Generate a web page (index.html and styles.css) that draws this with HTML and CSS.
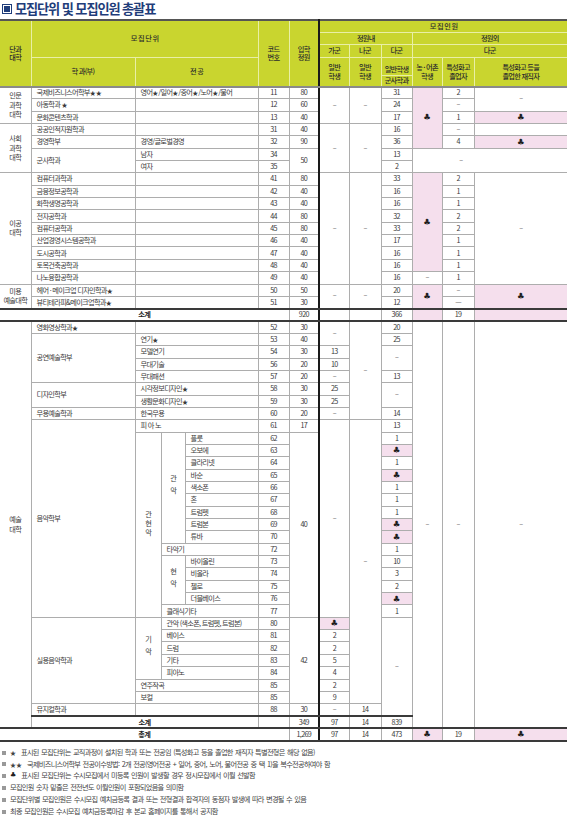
FILE: index.html
```html
<!DOCTYPE html>
<html lang="ko">
<head>
<meta charset="utf-8">
<title>모집단위 및 모집인원 총괄표</title>
<link rel="stylesheet" href="styles.css">
</head>
<body>
<div class="title"><span class="ico"></span><span class="ttl">모집단위 및 모집인원 총괄표</span></div>
<table class="tbl">
<colgroup>
<col class="c-col"><col class="c-dept"><col class="c-m1"><col class="c-m2"><col class="c-m3"><col class="c-code"><col class="c-quota"><col class="c-ga"><col class="c-na"><col class="c-da"><col class="c-farm"><col class="c-voc"><col class="c-work">
</colgroup>
<thead>
<tr class="h1">
<th rowspan="4" class="hb">단과<br>대학</th>
<th colspan="4" rowspan="3">모 집 단 위</th>
<th rowspan="4" class="hb">코드<br>번호</th>
<th rowspan="4" class="hb">입학<br>정원</th>
<th colspan="6">모 집 인 원</th>
</tr>
<tr class="h2"><th colspan="3">정원내</th><th colspan="3">정원외</th></tr>
<tr class="h3"><th>가군</th><th>나군</th><th>다군</th><th colspan="3">다군</th></tr>
<tr class="h4">
<th class="hb">학 과(부)</th><th colspan="3" class="hb">전 공</th>
<th class="hb">일반<br>학생</th><th class="hb">일반<br>학생</th>
<th class="hb split"><div class="s1">일반학생</div><div class="s2">군사학과</div></th>
<th class="hb">농 · 어촌<br>학생</th><th class="hb">특성화고<br>졸업자</th><th class="hb">특성화고 등을<br>졸업한 재직자</th>
</tr>
</thead>
<tbody>
<tr><td rowspan="3" class="coll">인문<br>과학<br>대학</td><td class="l">국제비즈니스어학부<span class="st">★★</span></td><td colspan="3" class="l">영어<span class="st">★</span>/일어<span class="st">★</span>/중어<span class="st">★</span>/노어<span class="st">★</span>/불어</td><td>11</td><td>80</td><td rowspan="3" class="d">–</td><td rowspan="3" class="d">–</td><td>31</td><td rowspan="5" class="pk"><span class="cl">♣</span></td><td>2</td><td rowspan="2" class="d">–</td></tr>
<tr><td class="l">아동학과 <span class="st">★</span></td><td colspan="3"></td><td>12</td><td>60</td><td>24</td><td class="d">–</td></tr>
<tr><td class="l">문화콘텐츠학과</td><td colspan="3"></td><td>13</td><td>40</td><td>17</td><td>1</td><td class="pk"><span class="cl">♣</span></td></tr>
<tr><td rowspan="4" class="coll">사회<br>과학<br>대학</td><td class="l">공공인적자원학과</td><td colspan="3"></td><td>31</td><td>40</td><td rowspan="4" class="d">–</td><td rowspan="4" class="d">–</td><td>16</td><td class="d">–</td><td></td></tr>
<tr><td class="l">경영학부</td><td colspan="3" class="l">경영/글로벌경영</td><td>32</td><td>90</td><td>36</td><td>4</td><td class="pk"><span class="cl">♣</span></td></tr>
<tr><td rowspan="2" class="l">군사학과</td><td colspan="3" class="l">남자</td><td>34</td><td rowspan="2">50</td><td>13</td><td colspan="3" rowspan="2" class="d shift">–</td></tr>
<tr><td colspan="3" class="l">여자</td><td>35</td><td>2</td></tr>
<tr><td rowspan="9" class="coll">이공<br>대학</td><td class="l">컴퓨터과학과</td><td colspan="3"></td><td>41</td><td>80</td><td rowspan="9" class="d">–</td><td rowspan="9" class="d">–</td><td>33</td><td rowspan="8" class="pk"><span class="cl">♣</span></td><td>2</td><td rowspan="9" class="d">–</td></tr>
<tr><td class="l">금융정보공학과</td><td colspan="3"></td><td>42</td><td>40</td><td>16</td><td>1</td></tr>
<tr><td class="l">화학생명공학과</td><td colspan="3"></td><td>43</td><td>40</td><td>16</td><td>1</td></tr>
<tr><td class="l">전자공학과</td><td colspan="3"></td><td>44</td><td>80</td><td>32</td><td>2</td></tr>
<tr><td class="l">컴퓨터공학과</td><td colspan="3"></td><td>45</td><td>80</td><td>33</td><td>2</td></tr>
<tr><td class="l">산업경영시스템공학과</td><td colspan="3"></td><td>46</td><td>40</td><td>17</td><td>1</td></tr>
<tr><td class="l">도시공학과</td><td colspan="3"></td><td>47</td><td>40</td><td>16</td><td>1</td></tr>
<tr><td class="l">토목건축공학과</td><td colspan="3"></td><td>48</td><td>40</td><td>16</td><td>1</td></tr>
<tr><td class="l">나노융합공학과</td><td colspan="3"></td><td>49</td><td>40</td><td>16</td><td class="d">–</td><td>1</td></tr>
<tr><td rowspan="2" class="coll">미용<br>예술대학</td><td class="l">헤어 · 메이크업 디자인학과<span class="st">★</span></td><td colspan="3"></td><td>50</td><td>50</td><td rowspan="2" class="d">–</td><td rowspan="2" class="d">–</td><td>20</td><td rowspan="2" class="pk"><span class="cl">♣</span></td><td class="d">–</td><td rowspan="2" class="pk"><span class="cl">♣</span></td></tr>
<tr><td class="l">뷰티테라피&amp;메이크업학과<span class="st">★</span></td><td colspan="3"></td><td>51</td><td>30</td><td>12</td><td class="d">—</td></tr>
<tr class="sub"><td colspan="6" class="lbl">소계</td><td>920</td><td></td><td></td><td>366</td><td class="pk"></td><td>19</td><td class="pk"></td></tr>
<tr><td rowspan="33" class="coll">예술<br>대학</td><td class="l">영화영상학과<span class="st">★</span></td><td colspan="3"></td><td>52</td><td>30</td><td rowspan="2" class="d">–</td><td rowspan="8" class="d">–</td><td>20</td><td rowspan="33" class="d">–</td><td rowspan="33" class="d">–</td><td rowspan="33" class="d">–</td></tr>
<tr><td rowspan="4" class="l">공연예술학부</td><td colspan="3" class="l">연기<span class="st">★</span></td><td>53</td><td>40</td><td>25</td></tr>
<tr><td colspan="3" class="l">모델연기</td><td>54</td><td>30</td><td>13</td><td rowspan="2" class="d">–</td></tr>
<tr><td colspan="3" class="l">무대기술</td><td>56</td><td>20</td><td>10</td></tr>
<tr><td colspan="3" class="l">무대패션</td><td>57</td><td>20</td><td class="d">–</td><td>13</td></tr>
<tr><td rowspan="2" class="l">디자인학부</td><td colspan="3" class="l">시각정보디자인<span class="st">★</span></td><td>58</td><td>30</td><td>25</td><td rowspan="2" class="d">–</td></tr>
<tr><td colspan="3" class="l">생활문화디자인<span class="st">★</span></td><td>59</td><td>30</td><td>25</td></tr>
<tr><td class="l">무용예술학과</td><td colspan="3" class="l">한국무용</td><td>60</td><td>20</td><td class="d">–</td><td>14</td></tr>
<tr><td rowspan="16" class="l">음악학부</td><td colspan="3" class="l">피 아 노</td><td>61</td><td>17</td><td rowspan="16" class="d">–</td><td rowspan="23" class="d">–</td><td>13</td></tr>
<tr><td rowspan="15" class="vt"><span class="vtx vt3">관현악</span></td><td rowspan="9" class="vt"><span class="vtx">관악</span></td><td class="l">플룻</td><td>62</td><td rowspan="15">40</td><td>1</td></tr>
<tr><td class="l">오보에</td><td>63</td><td class="pk"><span class="cl">♣</span></td></tr>
<tr><td class="l">클라리넷</td><td>64</td><td>1</td></tr>
<tr><td class="l">바순</td><td>65</td><td class="pk"><span class="cl">♣</span></td></tr>
<tr><td class="l">색소폰</td><td>66</td><td>1</td></tr>
<tr><td class="l">혼</td><td>67</td><td>1</td></tr>
<tr><td class="l">트럼펫</td><td>68</td><td>1</td></tr>
<tr><td class="l">트럼본</td><td>69</td><td class="pk"><span class="cl">♣</span></td></tr>
<tr><td class="l">튜바</td><td>70</td><td class="pk"><span class="cl">♣</span></td></tr>
<tr><td colspan="2" class="l">타악기</td><td>72</td><td>1</td></tr>
<tr><td rowspan="4" class="vt"><span class="vtx">현악</span></td><td class="l">바이올린</td><td>73</td><td>10</td></tr>
<tr><td class="l">비올라</td><td>74</td><td>3</td></tr>
<tr><td class="l">첼로</td><td>75</td><td>2</td></tr>
<tr><td class="l">더블베이스</td><td>76</td><td class="pk"><span class="cl">♣</span></td></tr>
<tr><td colspan="2" class="l">클래식기타</td><td>77</td><td>1</td></tr>
<tr><td rowspan="7" class="l">실용음악학과</td><td rowspan="5" class="vt"><span class="vtx">기악</span></td><td colspan="2" class="l">관악 (색소폰, 트럼펫, 트럼본)</td><td>80</td><td rowspan="7">42</td><td class="pk"><span class="cl">♣</span></td><td rowspan="8" class="d">–</td></tr>
<tr><td colspan="2" class="l">베이스</td><td>81</td><td>2</td></tr>
<tr><td colspan="2" class="l">드럼</td><td>82</td><td>2</td></tr>
<tr><td colspan="2" class="l">기타</td><td>83</td><td>5</td></tr>
<tr><td colspan="2" class="l">피아노</td><td>84</td><td>4</td></tr>
<tr><td colspan="3" class="l">연주작곡</td><td>85</td><td>2</td></tr>
<tr><td colspan="3" class="l">보컬</td><td>85</td><td>9</td></tr>
<tr><td class="l">뮤지컬학과</td><td colspan="3"></td><td>88</td><td>30</td><td class="d">–</td><td>14</td></tr>
<tr class="sub"><td colspan="4" class="lbl">소계</td><td></td><td>349</td><td>97</td><td>14</td><td>839</td></tr>
<tr class="sub"><td colspan="6" class="lbl">총계</td><td>1,269</td><td>97</td><td>14</td><td>473</td><td class="pk"><span class="cl">♣</span></td><td>19</td><td class="pk"><span class="cl">♣</span></td></tr>
</tbody>
</table>
<ul class="notes">
<li><span class="sq"></span><span class="st">★</span> 표시된 모집단위는 교직과정이 설치된 학과 또는 전공임 (특성화고 등을 졸업한 재직자 특별전형은 해당 없음)</li>
<li><span class="sq"></span><span class="st">★★</span> 국제비즈니스어학부 전공이수방법: 2개 전공(영어전공 + 일어, 중어, 노어, 불어전공 중 택 1)을 복수전공하여야 함</li>
<li><span class="sq"></span><span class="cl">♣</span> 표시된 모집단위는 수시모집에서 미등록 인원이 발생할 경우 정시모집에서 이월 선발함</li>
<li><span class="sq"></span>모집인원 숫자 밑줄은 전전년도 이월인원이 포함되었음을 의미함</li>
<li><span class="sq"></span>모집단위별 모집인원은 수시모집 예치금등록 결과 또는 전형결과 합격자의 동점자 발생에 따라 변경될 수 있음</li>
<li><span class="sq"></span>최종 모집인원은 수시모집 예치금등록마감 후 본교 홈페이지를 통해서 공지함</li>
</ul>
</body>
</html>
```

FILE: styles.css
```css
* { box-sizing: border-box; }
body {
  margin: 0;
  background: #fff;
  font-family: "Noto Sans CJK KR", "Noto Sans", sans-serif;
  color: #333;
}
.title {
  height: 19px;
  display: flex;
  align-items: center;
  gap: 3px;
  padding: 0 0 1px 2px;
  color: #1f3d7a;
  font-weight: 700;
  font-size: 13.2px;
  letter-spacing: -1.1px;
  line-height: 1;
}
.ico {
  width: 10px;
  height: 10px;
  border: 1px solid #1f3d7a;
  display: flex;
  align-items: center;
  justify-content: center;
  flex: none;
}
.ico::after { content: ""; width: 6px; height: 6px; background: #1f3d7a; }

.tbl {
  border-collapse: collapse;
  table-layout: fixed;
  width: 567px;
  font-size: 7.2px;
  letter-spacing: -0.7px;
  line-height: 1;
  border-top: 2px solid #555;
  border-left: hidden;
  border-right: hidden;
}
.c-col { width: 31px; }
.c-dept { width: 104px; }
.c-m1 { width: 26px; }
.c-m2 { width: 24px; }
.c-m3 { width: 73px; }
.c-code { width: 31px; }
.c-quota { width: 30px; }
.c-ga { width: 30px; border-left: 2px solid #1a1a1a; }
.c-na { width: 32px; }
.c-da { width: 31px; }
.c-farm { width: 30px; }
.c-voc { width: 32px; }
.c-work { width: 93px; }

.tbl th, .tbl td {
  padding: 0;
  text-align: center;
  vertical-align: middle;
  white-space: nowrap;
  overflow: hidden;
}
.tbl th {
  background: #c9d52f;
  border: 1px solid #e9efa6;
  font-weight: 500;
  color: #2b2b2b;
  line-height: 1.2;
}
.tbl th.hb { border-bottom: 2px solid #8a8a8a; }
.h1 { height: 12px; }
.h2 { height: 12px; }
.h3 { height: 13px; }
.h4 { height: 29px; }
.split { padding: 0; vertical-align: top; }
.split .s1 { height: 17px; display: flex; align-items: flex-end; justify-content: center; padding-bottom: 1px; }
.split .s2 { height: 11px; border-top: 1px solid #e9efa6; display: flex; align-items: center; justify-content: center; }

.tbl td {
  border: 1px solid #adadad;
  height: 12.35px;
  color: #3a3a3a;
}
.tbl td.l { text-align: left; padding-left: 5px; }
.tbl td.coll { line-height: 1.3; }
.tbl td.d { color: #555; }
.tbl td.shift { padding-right: 58px; }
.tbl td.pk { background: #f5dfed; }
.vtx {
  display: inline-block;
  writing-mode: vertical-rl;
  text-orientation: upright;
  letter-spacing: 4.6px;
  line-height: 1;
}
.vtx.vt3 { letter-spacing: 1.4px; }
.tbl tr.sub td { border-top: 2px solid #3a3a3a; border-bottom: 2px solid #3a3a3a; }
.tbl td.lbl { font-weight: 700; color: #222; }
.st { font-size: 6px; letter-spacing: 0; }
.cl { font-family: "DejaVu Sans", sans-serif; font-size: 8.5px; letter-spacing: 0; color: #1e1e1e; }

.notes {
  list-style: none;
  margin: 0;
  padding: 5px 0 0 2px;
  font-size: 7.2px;
  letter-spacing: -0.7px;
  word-spacing: 1px;
  line-height: 11.8px;
  color: #444;
}
.notes li { display: flex; align-items: center; gap: 3px; white-space: nowrap; }
.notes .sq { width: 4px; height: 4px; background: #999; flex: none; margin-right: 1px; }
.notes .st { margin-right: 2px; }
.notes .cl { font-size: 7px; margin-right: 2px; }
```
